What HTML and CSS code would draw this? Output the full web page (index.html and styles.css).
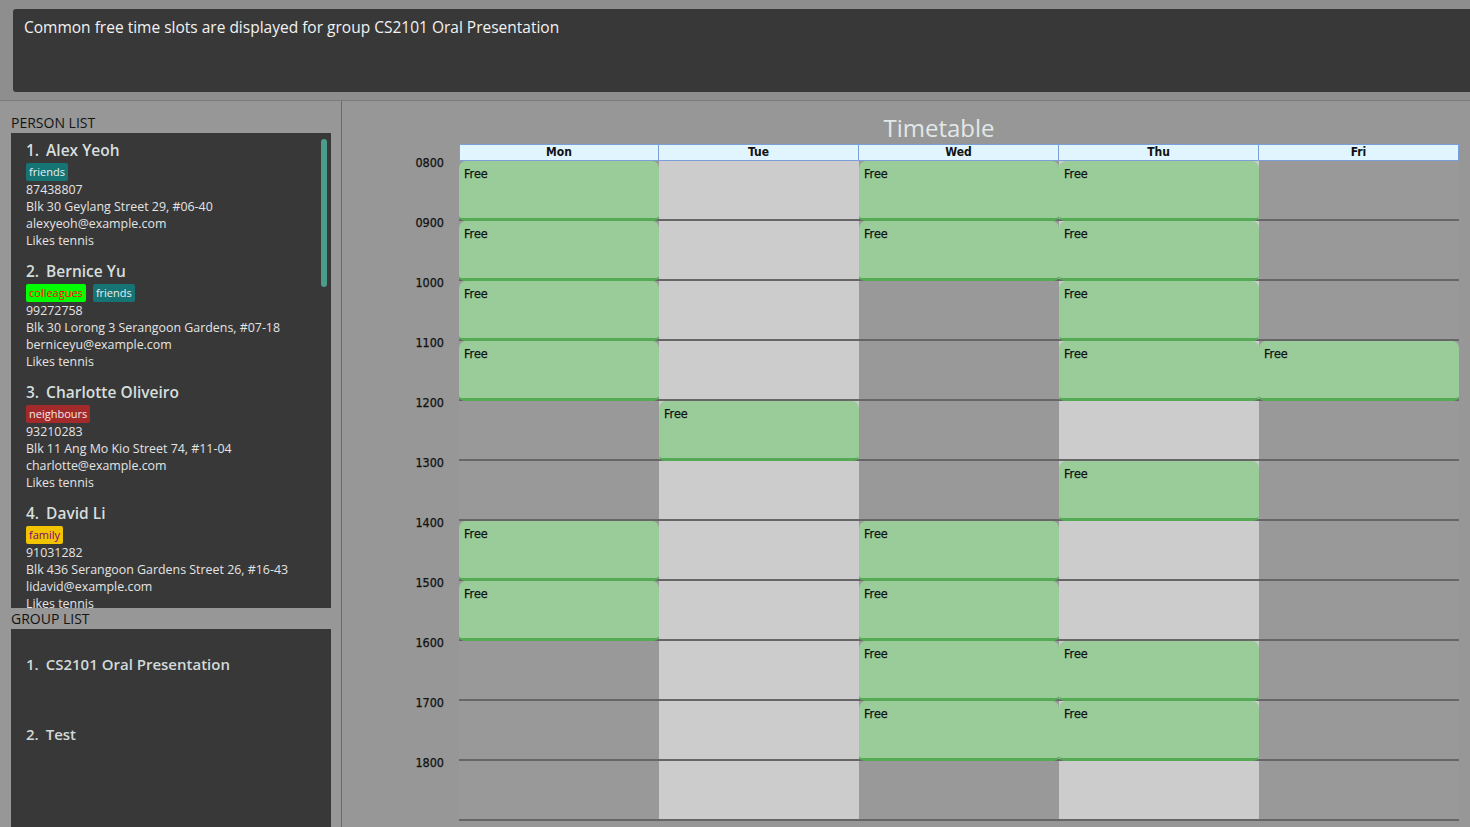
FILE: index.html
```html
<!DOCTYPE html>
<html>
<head>
<meta charset="utf-8">
<title>Address App</title>
<link rel="stylesheet" href="styles.css">
</head>
<body>
<div class="top">
  <div class="result">Common free time slots are displayed for group CS2101 Oral Presentation</div>
</div>
<div class="main">
  <div class="left">
    <div class="section-label">PERSON LIST</div>
    <div class="person-panel">
      <div class="card">
        <div class="name"><span class="idx">1.</span>Alex Yeoh</div>
        <div class="tags"><span class="tag t-friends">friends</span></div>
        <div class="line">87438807</div>
        <div class="line">Blk 30 Geylang Street 29, #06-40</div>
        <div class="line">alexyeoh@example.com</div>
        <div class="line">Likes tennis</div>
      </div>
      <div class="card">
        <div class="name"><span class="idx">2.</span>Bernice Yu</div>
        <div class="tags"><span class="tag t-colleagues">colleagues</span><span class="tag t-friends">friends</span></div>
        <div class="line">99272758</div>
        <div class="line">Blk 30 Lorong 3 Serangoon Gardens, #07-18</div>
        <div class="line">berniceyu@example.com</div>
        <div class="line">Likes tennis</div>
      </div>
      <div class="card">
        <div class="name"><span class="idx">3.</span>Charlotte Oliveiro</div>
        <div class="tags"><span class="tag t-neighbours">neighbours</span></div>
        <div class="line">93210283</div>
        <div class="line">Blk 11 Ang Mo Kio Street 74, #11-04</div>
        <div class="line">charlotte@example.com</div>
        <div class="line">Likes tennis</div>
      </div>
      <div class="card">
        <div class="name"><span class="idx">4.</span>David Li</div>
        <div class="tags"><span class="tag t-family">family</span></div>
        <div class="line">91031282</div>
        <div class="line">Blk 436 Serangoon Gardens Street 26, #16-43</div>
        <div class="line">lidavid@example.com</div>
        <div class="line">Likes tennis</div>
      </div>
      <div class="scrollbar"></div>
    </div>
    <div class="section-label group-label">GROUP LIST</div>
    <div class="group-panel">
      <div class="group"><span class="idx">1.</span>CS2101 Oral Presentation</div>
      <div class="group"><span class="idx">2.</span>Test</div>
    </div>
  </div>
  <div class="right">
    <div class="tt-title">Timetable</div>
    <div class="tt-grid">
      <div class="times">
        <div class="time">0800</div><div class="time">0900</div><div class="time">1000</div><div class="time">1100</div>
        <div class="time">1200</div><div class="time">1300</div><div class="time">1400</div><div class="time">1500</div>
        <div class="time">1600</div><div class="time">1700</div><div class="time">1800</div>
      </div>
      <div class="day dark">
        <div class="head first">Mon</div>
        <div class="cell"><div class="free">Free</div></div>
        <div class="cell"><div class="free">Free</div></div>
        <div class="cell"><div class="free">Free</div></div>
        <div class="cell"><div class="free">Free</div></div>
        <div class="cell"></div>
        <div class="cell"></div>
        <div class="cell"><div class="free">Free</div></div>
        <div class="cell"><div class="free">Free</div></div>
        <div class="cell"></div>
        <div class="cell"></div>
        <div class="cell"></div>
      </div>
      <div class="day light">
        <div class="head">Tue</div>
        <div class="cell"></div>
        <div class="cell"></div>
        <div class="cell"></div>
        <div class="cell"></div>
        <div class="cell"><div class="free">Free</div></div>
        <div class="cell"></div>
        <div class="cell"></div>
        <div class="cell"></div>
        <div class="cell"></div>
        <div class="cell"></div>
        <div class="cell"></div>
      </div>
      <div class="day dark">
        <div class="head">Wed</div>
        <div class="cell"><div class="free">Free</div></div>
        <div class="cell"><div class="free">Free</div></div>
        <div class="cell"></div>
        <div class="cell"></div>
        <div class="cell"></div>
        <div class="cell"></div>
        <div class="cell"><div class="free">Free</div></div>
        <div class="cell"><div class="free">Free</div></div>
        <div class="cell"><div class="free">Free</div></div>
        <div class="cell"><div class="free">Free</div></div>
        <div class="cell"></div>
      </div>
      <div class="day light">
        <div class="head">Thu</div>
        <div class="cell"><div class="free">Free</div></div>
        <div class="cell"><div class="free">Free</div></div>
        <div class="cell"><div class="free">Free</div></div>
        <div class="cell"><div class="free">Free</div></div>
        <div class="cell"></div>
        <div class="cell"><div class="free">Free</div></div>
        <div class="cell"></div>
        <div class="cell"></div>
        <div class="cell"><div class="free">Free</div></div>
        <div class="cell"><div class="free">Free</div></div>
        <div class="cell"></div>
      </div>
      <div class="day dark">
        <div class="head">Fri</div>
        <div class="cell"></div>
        <div class="cell"></div>
        <div class="cell"></div>
        <div class="cell"><div class="free">Free</div></div>
        <div class="cell"></div>
        <div class="cell"></div>
        <div class="cell"></div>
        <div class="cell"></div>
        <div class="cell"></div>
        <div class="cell"></div>
        <div class="cell"></div>
      </div>
    </div>
  </div>
</div>
</body>
</html>
```
FILE: styles.css
```css
* { box-sizing: border-box; }
html, body { margin: 0; padding: 0; }
body {
  width: 1470px;
  height: 827px;
  overflow: hidden;
  background: #979797;
  font-family: "Open Sans", "Noto Sans", sans-serif;
}
.top {
  height: 101px;
  background: #8e8e8e;
  padding: 9px 0 8px 13px;
  border-bottom: 1px solid #7c7c7c;
}
.result {
  height: 83px;
  background: #383838;
  border-radius: 3px 0 0 3px;
  padding: 7px 11px;
  color: #f2f2f2;
  font-size: 15.5px;
  line-height: 22px;
}
.main {
  display: flex;
  height: 726px;
}
.left {
  width: 342px;
  flex-shrink: 0;
  padding: 11px 0 0 11px;
  border-right: 1px solid #6a6a6a;
  display: flex;
  flex-direction: column;
}
.section-label {
  width: 320px;
  height: 21px;
  font-size: 14px;
  line-height: 21px;
  color: #141414;
}
.person-panel {
  position: relative;
  width: 320px;
  height: 475px;
  background: #383838;
  overflow: hidden;
}
.card {
  padding: 6px 0 5px 15px;
}
.name {
  height: 22px;
  font-size: 15.5px;
  font-weight: 600;
  line-height: 22px;
  color: #d6dede;
  display: flex;
}
.idx {
  margin-right: 7px;
}
.tags {
  display: flex;
  gap: 7px;
  height: 18px;
  margin-top: 2px;
}
.tag {
  height: 18px;
  padding: 0 3px;
  border-radius: 2px;
  font-size: 11px;
  line-height: 18px;
}
.t-friends { background: #167474; color: #e6f0f0; }
.t-colleagues { background: #00ff00; color: #ff0000; }
.t-neighbours { background: #a32a2a; color: #f4e8e8; }
.t-family { background: #f2c400; color: #800080; }
.line {
  height: 17px;
  font-size: 12.4px;
  line-height: 17px;
  color: #e4e4e4;
  white-space: nowrap;
}
.scrollbar {
  position: absolute;
  top: 6px;
  right: 4px;
  width: 6px;
  height: 148px;
  border-radius: 3px;
  background: #4c9c8c;
}
.group-label {
  height: 21px;
}
.group-panel {
  width: 320px;
  flex: 1;
  background: #383838;
}
.group {
  height: 70px;
  display: flex;
  align-items: center;
  padding-left: 15px;
  font-size: 15px;
  font-weight: 600;
  color: #d2dada;
}
.right {
  flex: 1;
  min-width: 0;
  padding: 13px 0 0 57px;
}
.tt-title {
  width: 1040px;
  margin: 0 0 2px 20px;
  height: 28px;
  text-align: center;
  font-size: 24px;
  line-height: 28px;
  color: #e2e8e8;
}
.tt-grid {
  display: flex;
  font-family: "DejaVu Sans Condensed", "DejaVu Sans", Verdana, sans-serif;
  font-stretch: condensed;
  font-size: 12.5px;
  color: #111;
}
.times {
  width: 60px;
  flex-shrink: 0;
  padding-top: 12px;
}
.time {
  height: 60px;
  line-height: 14px;
  text-align: right;
  padding-right: 15px;
  -webkit-text-stroke: 0.25px #111;
}
.day {
  width: 200px;
  flex-shrink: 0;
}
.dark { background: #999999; }
.light { background: #cccccc; }
.head {
  height: 17px;
  background: #e1f5fe;
  border: 1px solid #7b9fd8;
  border-left: none;
  text-align: center;
  font-weight: bold;
  font-size: 12px;
  line-height: 15px;
}
.head.first { border-left: 1px solid #7b9fd8; }
.cell {
  height: 60px;
  border-bottom: 2px solid #666666;
}
.free {
  height: 60px;
  background: #99cc99;
  border-bottom: 3px solid #55aa55;
  border-radius: 7px 7px 5px 5px;
  padding: 6px 5px;
  line-height: 14px;
  -webkit-text-stroke: 0.25px #111;
}
```
